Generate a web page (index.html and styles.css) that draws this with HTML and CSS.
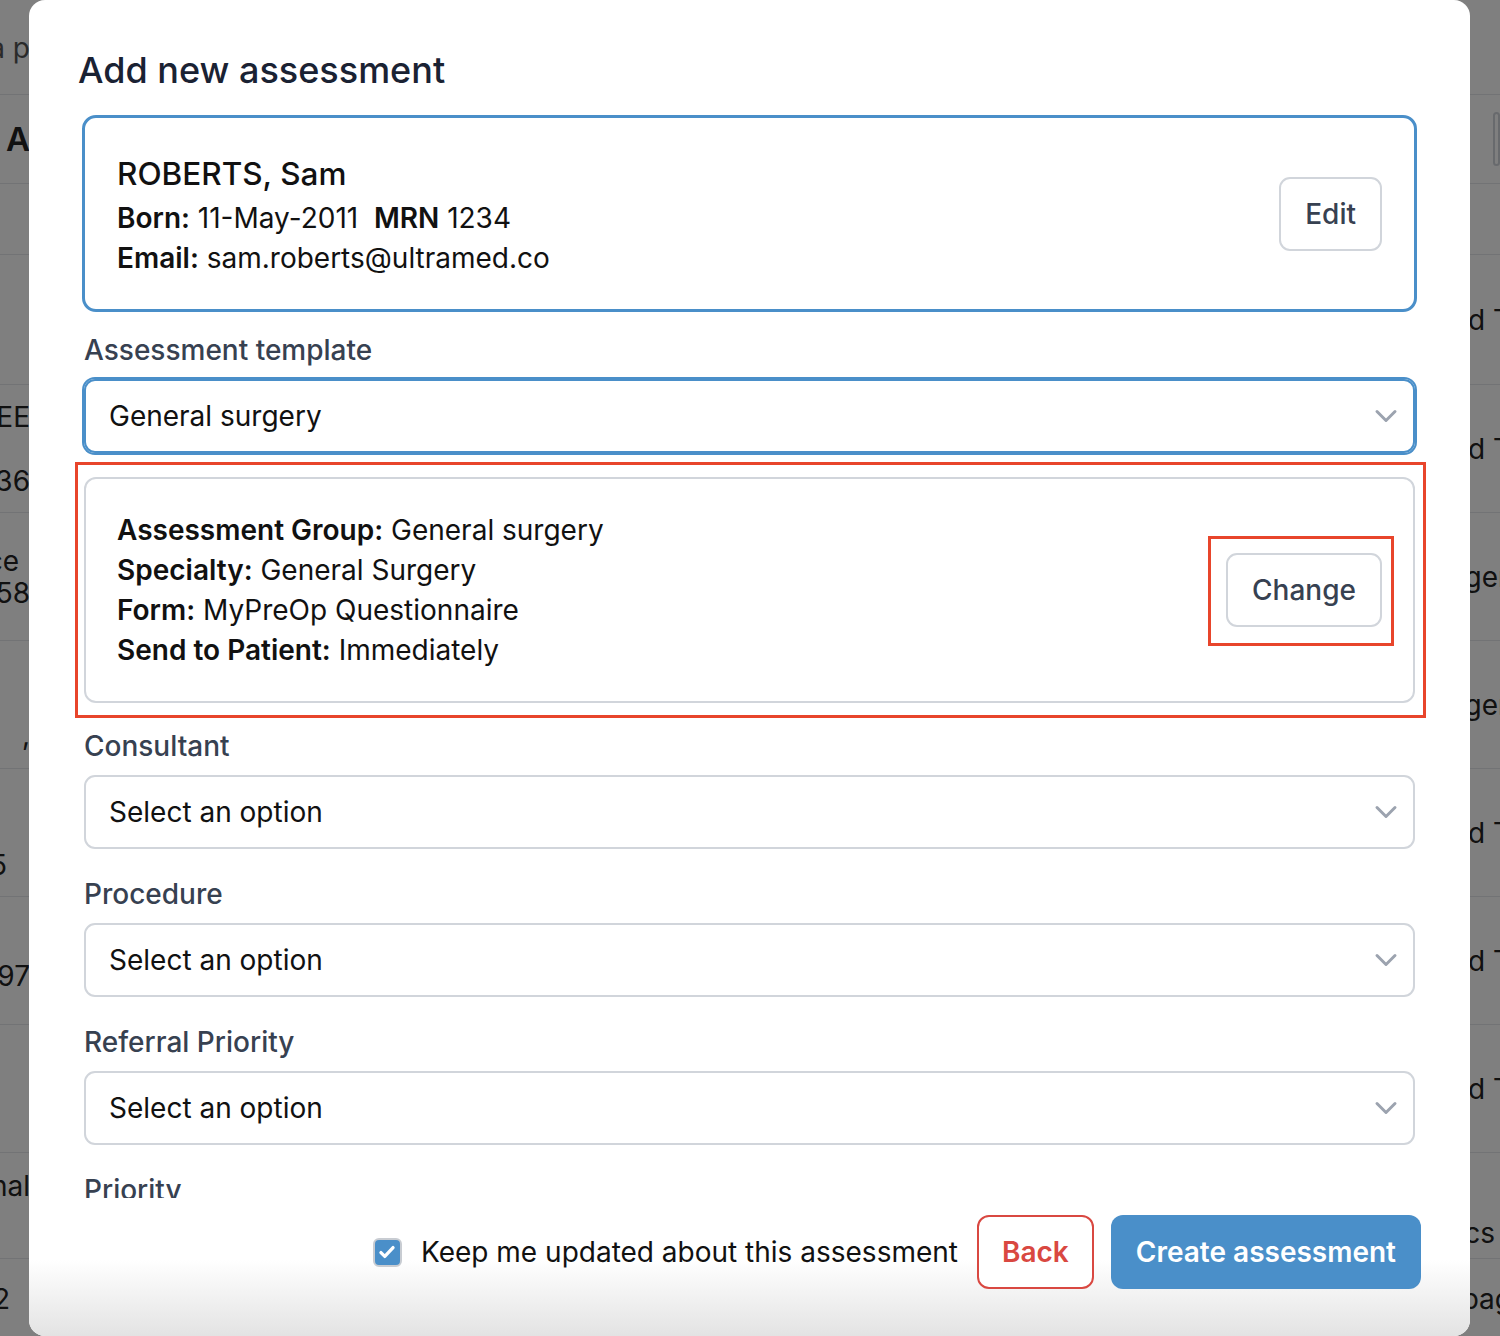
FILE: index.html
```html
<!DOCTYPE html>
<html lang="en">
<head>
  <meta charset="UTF-8">
  <meta name="viewport" content="width=device-width, initial-scale=1.0">
  <title>Add new assessment</title>
  <link rel="stylesheet" href="styles.css">
</head>
<body>
  <!-- page behind the modal -->
  <div class="page">
    <div class="page-top">
      <div class="cell-left"><span class="crumb">Create a p</span></div>
    </div>
    <div class="page-head">
      <div class="cell-left"><span class="heading">A</span></div>
      <div class="cell-right"><span class="ghost-btn"></span></div>
    </div>
    <div class="table-head"></div>
    <div class="row row-first">
      <div class="cell-left"></div>
      <div class="cell-right"><span>Wound T</span></div>
    </div>
    <div class="row">
      <div class="cell-left"><span class="stack-wide">JONES, DEE<br>8636</span></div>
      <div class="cell-right"><span>Wound T</span></div>
    </div>
    <div class="row">
      <div class="cell-left"><span><span class="end-in">Grace</span>0358</span></div>
      <div class="cell-right"><span class="shift-ge">Surgery</span></div>
    </div>
    <div class="row">
      <div class="cell-left"><span class="mark">,</span></div>
      <div class="cell-right"><span class="shift-ge">Surgery</span></div>
    </div>
    <div class="row">
      <div class="cell-left"><span class="low-five">5</span></div>
      <div class="cell-right"><span>Wound T</span></div>
    </div>
    <div class="row">
      <div class="cell-left"><span class="drop">4397</span></div>
      <div class="cell-right"><span>Wound T</span></div>
    </div>
    <div class="row">
      <div class="cell-left"></div>
      <div class="cell-right"><span>Wound T</span></div>
    </div>
    <div class="row row-short">
      <div class="cell-left"><span class="lift">Personal</span></div>
      <div class="cell-right"><span class="shift-cs">Orthopaedics</span></div>
    </div>
    <div class="row row-last">
      <div class="cell-left"><span class="end-two">2</span></div>
      <div class="cell-right"><span>Next page</span></div>
    </div>
  </div>

  <div class="overlay"></div>

  <div class="modal">
    <div class="modal-body">
      <h1 class="modal-title">Add new assessment</h1>

      <div class="patient-card">
        <div class="patient-info">
          <div class="patient-name">ROBERTS, Sam</div>
          <div><b>Born:</b> 11-May-2011&nbsp;&nbsp;<b>MRN</b> 1234</div>
          <div><b>Email:</b> sam.roberts@ultramed.co</div>
        </div>
        <button class="btn-outline">Edit</button>
      </div>

      <div class="field field-template">
        <label class="field-label">Assessment template</label>
        <div class="select select-focus">
          <span>General surgery</span>
          <svg class="chevron" viewBox="0 0 20 20" width="30" height="30"><path d="M4 7l6 6 6-6" fill="none" stroke="currentColor" stroke-width="2" stroke-linecap="round" stroke-linejoin="round"/></svg>
        </div>
      </div>

      <div class="highlight">
        <div class="template-card">
          <div class="template-info">
            <div><b>Assessment Group:</b> General surgery</div>
            <div><b>Specialty:</b> General Surgery</div>
            <div><b>Form:</b> MyPreOp Questionnaire</div>
            <div><b>Send to Patient:</b> Immediately</div>
          </div>
          <div class="highlight-btn">
            <button class="btn-outline">Change</button>
          </div>
        </div>
      </div>

      <div class="field">
        <label class="field-label">Consultant</label>
        <div class="select">
          <span>Select an option</span>
          <svg class="chevron" viewBox="0 0 20 20" width="30" height="30"><path d="M4 7l6 6 6-6" fill="none" stroke="currentColor" stroke-width="2" stroke-linecap="round" stroke-linejoin="round"/></svg>
        </div>
      </div>

      <div class="field">
        <label class="field-label">Procedure</label>
        <div class="select">
          <span>Select an option</span>
          <svg class="chevron" viewBox="0 0 20 20" width="30" height="30"><path d="M4 7l6 6 6-6" fill="none" stroke="currentColor" stroke-width="2" stroke-linecap="round" stroke-linejoin="round"/></svg>
        </div>
      </div>

      <div class="field">
        <label class="field-label">Referral Priority</label>
        <div class="select">
          <span>Select an option</span>
          <svg class="chevron" viewBox="0 0 20 20" width="30" height="30"><path d="M4 7l6 6 6-6" fill="none" stroke="currentColor" stroke-width="2" stroke-linecap="round" stroke-linejoin="round"/></svg>
        </div>
      </div>

      <div class="field">
        <label class="field-label">Priority</label>
        <div class="select">
          <span>Select an option</span>
        </div>
      </div>
    </div>

    <div class="modal-footer">
      <label class="check">
        <span class="check-box">
          <svg viewBox="0 0 20 20" width="22" height="22"><path d="M4.5 10.5l3.5 3.5L15.5 6" fill="none" stroke="#fff" stroke-width="3" stroke-linecap="round" stroke-linejoin="round"/></svg>
        </span>
        Keep me updated about this assessment
      </label>
      <button class="btn-back">Back</button>
      <button class="btn-primary">Create assessment</button>
    </div>
  </div>
</body>
</html>
```

FILE: styles.css
```css
:root {
  --blue: #4a8fc9;
  --red-mark: #e8452b;
  --red: #d94841;
  --text-main: #111111;
  --text-label: #374151;
  --border: #d1d5db;
}

* {
  box-sizing: border-box;
  margin: 0;
  padding: 0;
}

html, body {
  height: 100%;
  overflow: hidden;
}

body {
  font-family: Inter, "Noto Sans", sans-serif;
  font-size: 28px;
  color: var(--text-main);
  background: #ffffff;
}

/* background page */
.page {
  display: flex;
  flex-direction: column;
  color: #222;
}

.cell-left,
.cell-right {
  overflow: hidden;
  display: flex;
  white-space: nowrap;
}

.cell-left {
  width: 30px;
  justify-content: flex-end;
  text-align: right;
}

.cell-left > span {
  line-height: 32px;
}

.cell-right {
  width: 108px;
}

.page-top {
  height: 95px;
  display: flex;
  align-items: center;
  border-bottom: 1px solid #e5e7eb;
}

.crumb {
  color: #555;
  padding-top: 2px;
}

.page-head {
  height: 89px;
  display: flex;
  align-items: center;
  justify-content: space-between;
  border-bottom: 1px solid #e5e7eb;
}

.heading {
  font-size: 33px;
  font-weight: 600;
}

.ghost-btn {
  display: block;
  width: 60px;
  height: 54px;
  margin-left: 101px;
  border: 2px solid #d1d5db;
  border-radius: 10px;
}

.table-head {
  height: 71px;
  border-bottom: 1px solid #e5e7eb;
}

.row {
  height: 128px;
  display: flex;
  align-items: center;
  justify-content: space-between;
  border-bottom: 1px solid #e5e7eb;
}

.row-first {
  height: 130px;
}

.row-short {
  height: 106px;
}

.row-last {
  height: 80px;
  border-bottom: none;
}

.stack-wide {
  line-height: 64px !important;
}

.end-in {
  display: block;
  padding-right: 11px;
}

.mark {
  padding-top: 60px;
}

.low-five {
  padding: 64px 23px 0 0;
}

.drop {
  padding-top: 30px;
}

.lift {
  padding-bottom: 40px;
}

.end-two {
  padding-right: 20px;
}

.shift-ge {
  margin-left: 28px;
}

.shift-cs {
  margin-left: -76px;
  padding-top: 54px;
}

.overlay {
  position: fixed;
  inset: 0;
  background: rgba(0, 0, 0, 0.5);
}

/* modal */
.modal {
  position: fixed;
  left: 29px;
  top: 0;
  width: 1441px;
  height: 1336px;
  background: #ffffff;
  border-radius: 16px;
  display: flex;
  flex-direction: column;
  overflow: hidden;
}

.modal-body {
  flex: 1;
  overflow: hidden;
  padding: 48px 53px 0;
}

.modal-title {
  font-size: 36px;
  line-height: 44px;
  font-weight: 500;
  color: #1a2233;
  margin: 0 0 23px -4px;
}

.patient-card {
  display: flex;
  align-items: center;
  justify-content: space-between;
  border: 3px solid var(--blue);
  border-radius: 14px;
  padding: 32px 32px 31px;
  line-height: 40px;
}

.patient-name {
  font-size: 31.5px;
  font-weight: 500;
  line-height: 48px;
}

b {
  font-weight: 600;
}

.btn-outline {
  font-family: inherit;
  font-size: 28px;
  font-weight: 500;
  color: #374151;
  background: #ffffff;
  border: 2px solid var(--border);
  border-radius: 11px;
  height: 74px;
  padding: 0 24px;
}

.field {
  margin-top: 25px;
  padding: 0 2px;
}

.field-template {
  margin-top: 18px;
}

.highlight + .field {
  margin-top: 23px;
}

.field-label {
  display: block;
  font-weight: 500;
  color: var(--text-label);
  line-height: 40px;
  margin-bottom: 9px;
}

.select {
  display: flex;
  align-items: center;
  justify-content: space-between;
  height: 74px;
  padding: 0 12px 0 23px;
  border: 2px solid var(--border);
  border-radius: 11px;
}

.select-focus {
  border-color: var(--blue);
  box-shadow: 0 0 0 2px var(--blue);
}

.chevron {
  color: #9ca3af;
}

/* red annotation boxes */
.highlight {
  position: relative;
  margin: 24px 2px 0;
}

.highlight::after,
.highlight-btn::after {
  content: '';
  position: absolute;
  border: 3px solid var(--red-mark);
  pointer-events: none;
}

.highlight::after {
  inset: -15px -11px -15px -9px;
}

.template-card {
  display: flex;
  align-items: center;
  justify-content: space-between;
  border: 2px solid var(--border);
  border-radius: 12px;
  padding: 31px;
  line-height: 40px;
}

.highlight-btn {
  position: relative;
}

.highlight-btn::after {
  inset: -17px -12px -19px -18px;
}

/* footer */
.modal-footer {
  display: flex;
  align-items: center;
  justify-content: flex-end;
  gap: 17px;
  padding: 17px 49px 47px;
  background: linear-gradient(to bottom, #ffffff 45%, #e3e3e3 100%);
}

.check {
  display: flex;
  align-items: center;
  gap: 19px;
  margin-right: 2px;
}

.check-box {
  width: 29px;
  height: 29px;
  border-radius: 6px;
  background: var(--blue);
  border: 2px solid #c8ccd2;
  display: flex;
  align-items: center;
  justify-content: center;
}

.btn-back,
.btn-primary {
  font-family: inherit;
  font-size: 28px;
  font-weight: 600;
  height: 74px;
  border-radius: 12px;
  padding: 0 25px;
}

.btn-back {
  color: var(--red);
  background: #ffffff;
  border: 2px solid var(--red);
  padding: 0 23px;
}

.btn-primary {
  color: #ffffff;
  background: var(--blue);
  border: none;
}
```
